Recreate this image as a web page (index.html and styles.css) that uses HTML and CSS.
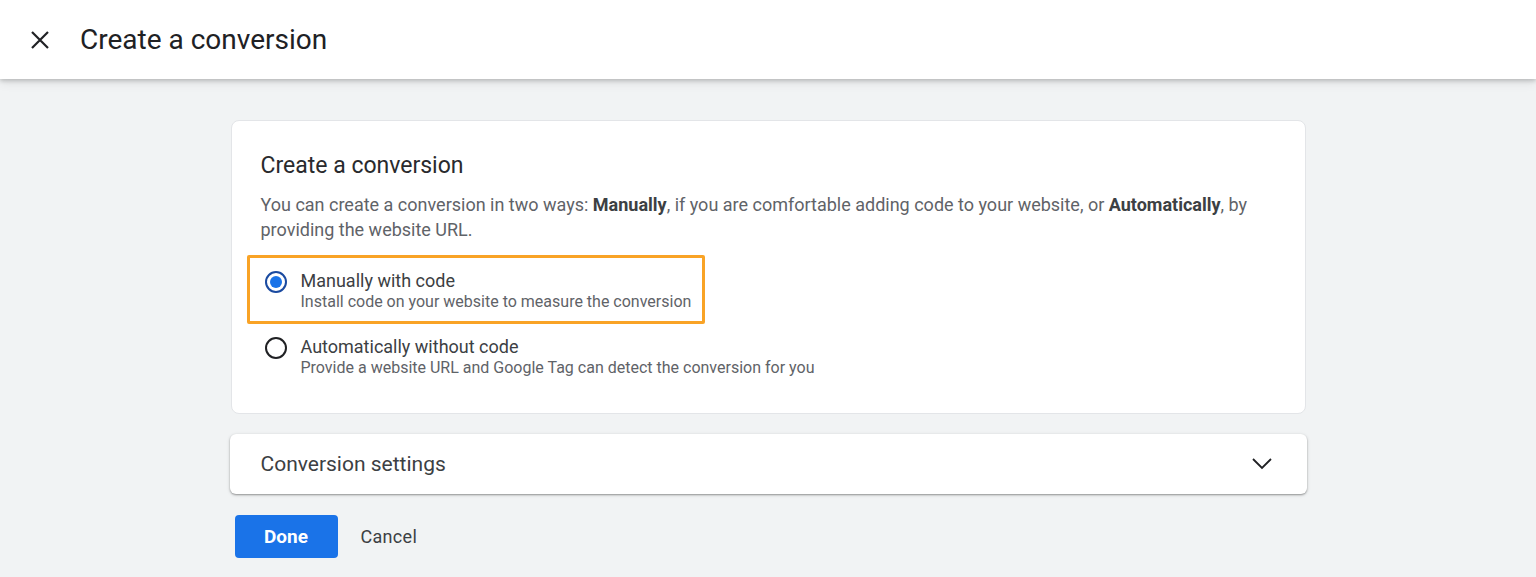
FILE: index.html
```html
<!DOCTYPE html>
<html lang="en">
<head>
<meta charset="utf-8">
<title>Create a conversion</title>
<link rel="stylesheet" href="styles.css">
</head>
<body>
<header class="topbar">
  <button class="close-btn" aria-label="Close">
    <svg width="20" height="20" viewBox="0 0 20 20"><path d="M2 2 L18 18 M18 2 L2 18" stroke="#202124" stroke-width="2.2" fill="none"/></svg>
  </button>
  <h1 class="topbar-title">Create a conversion</h1>
</header>
<main class="main">
  <section class="card">
    <h2 class="card-title">Create a conversion</h2>
    <p class="card-desc">You can create a conversion in two ways: <b>Manually</b>, if you are comfortable adding code to your website, or <b>Automatically</b>, by providing the website URL.</p>
    <div class="options">
      <label class="option option-highlight">
        <span class="radio radio-checked"><span class="radio-dot"></span></span>
        <span class="option-text">
          <span class="option-label">Manually with code</span>
          <span class="option-sub">Install code on your website to measure the conversion</span>
        </span>
      </label>
      <label class="option">
        <span class="radio"></span>
        <span class="option-text">
          <span class="option-label">Automatically without code</span>
          <span class="option-sub">Provide a website URL and Google Tag can detect the conversion for you</span>
        </span>
      </label>
    </div>
  </section>
  <section class="panel">
    <span class="panel-title">Conversion settings</span>
    <svg class="chevron" width="20" height="12" viewBox="0 0 20 12"><path d="M1 1 L10 10 L19 1" stroke="#202124" stroke-width="1.8" fill="none"/></svg>
  </section>
  <div class="actions">
    <button class="btn-done">Done</button>
    <button class="btn-cancel">Cancel</button>
  </div>
</main>
</body>
</html>
```
FILE: styles.css
```css
* { box-sizing: border-box; }
html, body { margin: 0; padding: 0; }
body {
  background: #f1f3f4;
  font-family: Roboto, "Liberation Sans", Arial, sans-serif;
  color: #202124;
  height: 577px;
  overflow: hidden;
}
.topbar {
  height: 79px;
  background: #fff;
  display: flex;
  align-items: center;
  padding-left: 30px;
  box-shadow: 0 2px 4px rgba(0,0,0,0.18), 0 4px 10px rgba(0,0,0,0.08);
  position: relative;
  z-index: 1;
}
.close-btn {
  border: 0;
  background: none;
  padding: 0;
  width: 20px;
  height: 20px;
  display: flex;
  margin-top: 1px;
}
.topbar-title {
  margin: 0 0 0 30px;
  font-size: 28px;
  font-weight: 400;
  color: #202124;
}
.main {
  width: 1075px;
  margin: 41px auto 0;
}
.card {
  background: #fff;
  border: 1px solid #e3e5e8;
  border-radius: 8px;
  padding: 31px 29px 23px;
}
.card-title {
  margin: 0;
  font-size: 23px;
  line-height: 28px;
  font-weight: 400;
  color: #292a2d;
}
.card-desc {
  margin: 12px 0 0;
  font-size: 18px;
  line-height: 25px;
  color: #5f6368;
}
.card-desc b { color: #3c4043; font-weight: 700; }
.options {
  margin-top: 13px;
  margin-left: -14px;
  display: flex;
  flex-direction: column;
  align-items: flex-start;
}
.option {
  display: flex;
  align-items: flex-start;
  gap: 14px;
  border: 3px solid transparent;
  border-radius: 2px;
  padding: 12px 11px 9px 15px;
}
.option + .option { margin-top: -3px; }
.option-highlight { border-color: #f9a326; }
.radio {
  width: 22px;
  height: 22px;
  border-radius: 50%;
  border: 2px solid #202124;
  flex: none;
  display: flex;
  align-items: center;
  justify-content: center;
  margin-top: 1px;
}
.radio-checked { border-color: #1a4aa0; }
.radio-dot {
  width: 12px;
  height: 12px;
  border-radius: 50%;
  background: #1a73e8;
}
.option-text { display: flex; flex-direction: column; }
.option-label {
  font-size: 18px;
  line-height: 22px;
  color: #3c4043;
}
.option-sub {
  font-size: 16px;
  line-height: 20px;
  color: #5f6368;
}
.panel {
  margin: 20px -1px 0;
  height: 60px;
  background: #fff;
  border-radius: 6px;
  box-shadow: 0 1px 2px rgba(0,0,0,0.35), 0 1px 4px rgba(0,0,0,0.1);
  display: flex;
  align-items: center;
  justify-content: space-between;
  padding: 0 35px 0 31px;
}
.panel-title {
  font-size: 21px;
  color: #3c4043;
}
.chevron { margin-top: -1px; }
.actions {
  margin: 21px 0 0 4px;
  display: flex;
  align-items: center;
}
.btn-done {
  width: 103px;
  height: 43px;
  background: #1a73e8;
  color: #fff;
  border: 0;
  border-radius: 4px;
  font-family: Roboto, "Liberation Sans", Arial, sans-serif;
  font-size: 19px;
  font-weight: 700;
}
.btn-cancel {
  margin-left: 12px;
  background: none;
  border: 0;
  padding: 0 11px;
  height: 43px;
  font-family: Roboto, "Liberation Sans", Arial, sans-serif;
  font-size: 18px;
  letter-spacing: 0.3px;
  color: #3c4043;
}
```
